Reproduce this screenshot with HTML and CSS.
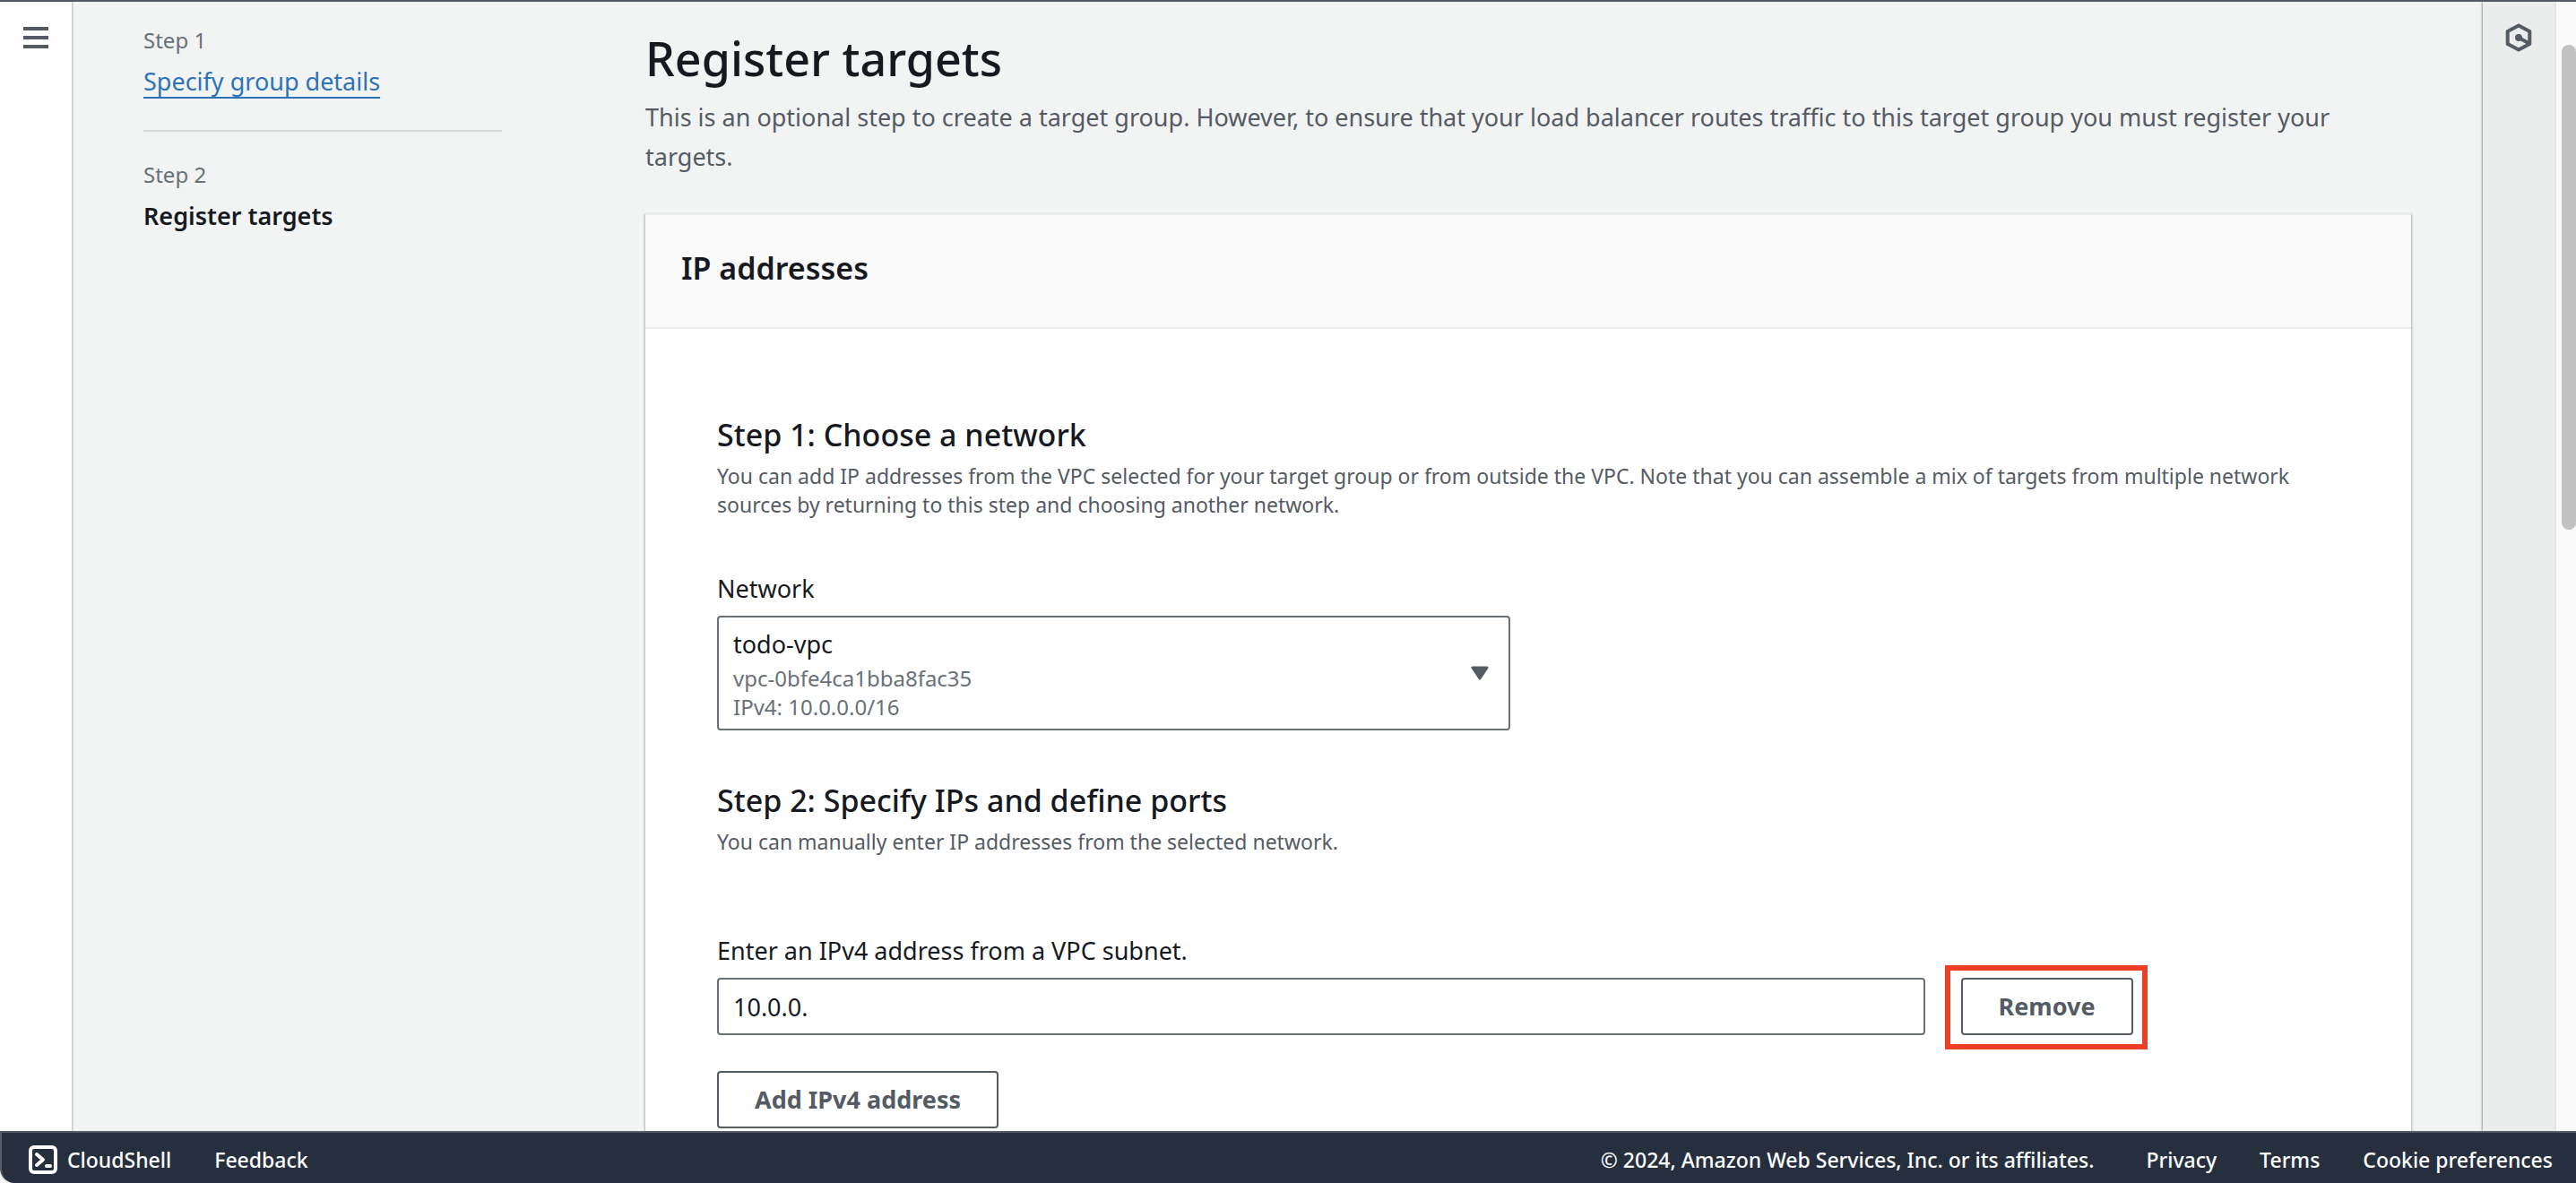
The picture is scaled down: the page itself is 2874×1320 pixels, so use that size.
FILE: index.html
```html
<!DOCTYPE html>
<html lang="en">
<head>
<meta charset="utf-8">
<meta name="viewport" content="width=device-width, initial-scale=1">
<title>Register targets</title>
<link rel="stylesheet" href="styles.css">
</head>
<body>
<div class="shell">
  <div class="rail">
    <button class="icon-button" type="button" aria-label="Open navigation">
      <svg width="28" height="24" viewBox="0 0 28 24" aria-hidden="true"><path d="M2 2h24M2 12h24M2 22h24" fill="none" stroke="#545b64" stroke-width="4" stroke-linecap="square"/></svg>
    </button>
  </div>
  <nav class="steps" aria-label="Steps">
    <ol class="step-list">
      <li class="step"><span class="step-number">Step 1</span><a class="step-link" href="#">Specify group details</a></li>
      <li class="step"><span class="step-number">Step 2</span><span class="step-current" aria-current="step">Register targets</span></li>
    </ol>
  </nav>
  <main class="content">
    <h1 class="title">Register targets</h1>
    <p class="intro">This is an optional step to create a target group. However, to ensure that your load balancer routes traffic to this target group you must register your targets.</p>
    <section class="card">
      <header class="card-header"><h2 class="card-title">IP addresses</h2></header>
      <div class="card-body">
        <h3 class="section-title">Step 1: Choose a network</h3>
        <p class="hint">You can add IP addresses from the VPC selected for your target group or from outside the VPC. Note that you can assemble a mix of targets from multiple network sources by returning to this step and choosing another network.</p>
        <div class="columns network">
          <div class="half">
            <label class="label" for="network">Network</label>
            <div class="select-box">
              <select class="select" id="network"><option>todo-vpc</option></select>
              <div class="select-details"><span>vpc-0bfe4ca1bba8fac35</span><span>IPv4: 10.0.0.0/16</span></div>
              <svg class="caret" width="20" height="16" viewBox="0 0 20 16" aria-hidden="true"><path d="M2 2h16l-8 12z" fill="#545b64" stroke="#545b64" stroke-width="3" stroke-linejoin="round"/></svg>
            </div>
          </div>
        </div>
        <h3 class="section-title">Step 2: Specify IPs and define ports</h3>
        <p class="hint">You can manually enter IP addresses from the selected network.</p>
        <label class="label address-label" for="address">Enter an IPv4 address from a VPC subnet.</label>
        <div class="columns">
          <input class="input" id="address" type="text" value="10.0.0.">
          <div class="row-action"><span class="highlight"><button class="button" type="button">Remove</button></span></div>
        </div>
        <button class="button add" type="button">Add IPv4 address</button>
      </div>
    </section>
  </main>
  <aside class="tools">
    <button class="icon-button" type="button" aria-label="Open panel">
      <svg width="32" height="32" viewBox="0 0 32 32" aria-hidden="true"><g fill="none" stroke="#545b64" stroke-width="4" stroke-linejoin="round"><path d="M16 2.500L28.300 9v14L16 29.500 3.700 23V9z"/><path d="M16 16l11 6"/></g><circle cx="16" cy="16" r="4" fill="#545b64"/></svg>
    </button>
  </aside>
  <div class="scroll-track"><div class="scroll-thumb"></div></div>
</div>
<footer class="footer">
  <a class="footer-link cloudshell" href="#">
    <svg width="32" height="32" viewBox="0 0 32 32" fill="none" stroke="#fff" stroke-width="4" aria-hidden="true"><rect x="2" y="2" width="28" height="28" rx="4"/><path d="M9 10l7 6-7 6" stroke-linecap="round" stroke-linejoin="round"/><path d="M20 23h4" stroke-linecap="round"/></svg>
    CloudShell</a>
  <a class="footer-link" href="#">Feedback</a>
  <span class="copyright">© 2024, Amazon Web Services, Inc. or its affiliates.</span>
  <a class="footer-link" href="#">Privacy</a>
  <a class="footer-link" href="#">Terms</a>
  <a class="footer-link" href="#">Cookie preferences</a>
</footer>
</body>
</html>
```
FILE: styles.css
```css
* { box-sizing: border-box; }
body {
  margin: 0;
  height: 100vh;
  display: flex;
  flex-direction: column;
  overflow: hidden;
  border-top: 2px solid #545b64;
  background: #f2f3f3;
  color: #16191f;
  font: 450 27px/44px "Noto Sans", "Open Sans", sans-serif;
}
h1, h2, h3, p, ol { margin: 0; padding: 0; }
ol { list-style: none; }
button, input, select { font: inherit; color: inherit; margin: 0; }

.shell { flex: 1; min-height: 0; display: flex; overflow: hidden; }
.rail {
  width: 80px;
  padding-top: 28px;
  background: #fff;
  box-shadow: 1px 0 2px #aab7b8;
}
.icon-button {
  display: flex;
  margin: 0 auto;
  padding: 0;
  border: 0;
  background: none;
  cursor: pointer;
}

.steps { width: 480px; padding: 27px 0 0 80px; }
.step { padding-bottom: 32px; }
.step + .step { padding-top: 32px; border-top: 2px solid #d5dbdb; }
.step-number {
  display: block;
  margin-bottom: 8px;
  color: #687078;
  font-size: 24px;
  line-height: 32px;
}
.step-link {
  display: block;
  color: #2e73b8;
  text-decoration: underline 2px;
  text-underline-offset: 7px;
  text-decoration-skip-ink: none;
}
.step-current { display: block; font-weight: 650; }

.content { flex: 1; min-width: 0; padding: 31px 80px 0 160px; }
.title { font-size: 52px; line-height: 64px; font-weight: 500; }
.intro { margin-top: 12px; color: #545b64; }
.card {
  margin-top: 41px;
  background: #fff;
  border-top: 2px solid #eaeded;
  box-shadow: 1px 1px 2px #aab7b8, -1px 1px 2px #aab7b8;
}
.card-header {
  padding: 37px 40px 44px;
  background: #fafafa;
  border-bottom: 2px solid #eaeded;
}
.card-title { font-size: 34px; line-height: 44px; font-weight: 650; }
.card-body { padding: 96px 80px; }
.section-title { font-size: 34px; line-height: 44px; font-weight: 500; }
.hint {
  margin-top: 8px;
  color: #545b64;
  font-size: 23px;
  line-height: 32px;
}
.columns { display: grid; grid-template-columns: repeat(12, 1fr); column-gap: 40px; }
.network { margin: 56px 0; }
.half { grid-column: span 6; }
.label { display: block; margin-bottom: 8px; }
.address-label { margin-top: 84px; }

.select-box { display: grid; align-items: center; height: 128px; }
.select-box > * { grid-area: 1 / 1; }
.select {
  appearance: none;
  width: 100%;
  height: 100%;
  padding: 0 16px 64px;
  border: 2px solid #687078;
  border-radius: 4px;
  background: #fff;
}
.select-details {
  align-self: end;
  display: grid;
  padding: 0 18px 10px;
  color: #687078;
  font-size: 24px;
  line-height: 32px;
  pointer-events: none;
}
.caret { justify-self: end; margin-right: 24px; pointer-events: none; }

.input {
  grid-column: span 9;
  width: 100%;
  height: 64px;
  padding: 0 16px;
  border: 2px solid #687078;
  border-radius: 4px;
  background: #fff;
}
.row-action { grid-column: span 3; }
.highlight { position: relative; display: inline-flex; }
.highlight::after {
  content: "";
  position: absolute;
  inset: -14px -16px -16px -18px;
  border: 6px solid #eb4026;
  pointer-events: none;
}
.button {
  height: 64px;
  padding: 0 40px;
  border: 2px solid #545b64;
  border-radius: 4px;
  background: #fff;
  color: #545b64;
  font-weight: 700;
  cursor: pointer;
}
.add { margin-top: 40px; }

.tools {
  width: 82px;
  padding-top: 24px;
  background: #eaedec;
  border-right: 2px solid #e4e7e7;
  box-shadow: -1px 0 2px #999;
}
.scroll-track { width: 22px; padding: 48px 0 0 6px; background: #fafafa; }
.scroll-thumb { height: 44.6%; border-radius: 8px; background: #c1c1c1; }

.footer {
  display: flex;
  align-items: center;
  gap: 48px;
  height: 58px;
  padding: 4px 26px 0 30px;
  border-top: 2px solid #545b64;
  border-left: 2px solid #545b64;
  border-bottom-left-radius: 16px;
  background: #262f3e;
  color: #fff;
  font-size: 23px;
  font-weight: 500;
  line-height: 32px;
  white-space: nowrap;
}
.footer-link { color: inherit; text-decoration: none; }
.cloudshell { display: flex; gap: 11px; }
.copyright { margin: 0 10px 0 auto; }
```
